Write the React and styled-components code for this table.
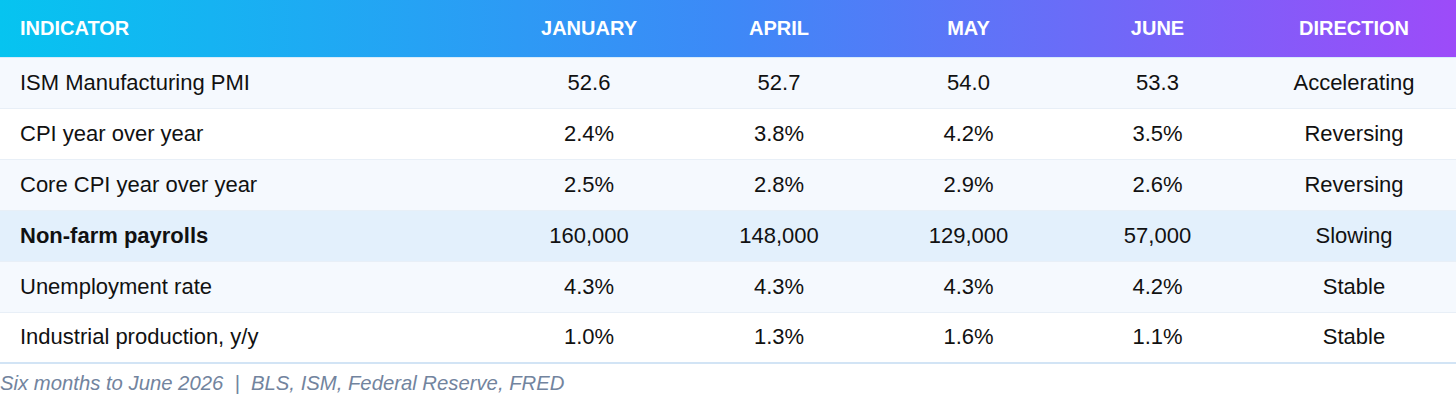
import React from "react";
import styled, { createGlobalStyle } from "styled-components";

const GlobalStyle = createGlobalStyle`
  body {
    margin: 0;
    background: #ffffff;
    font-family: "Liberation Sans", Arial, sans-serif;
  }
`;

const columns = [
  { key: "indicator", label: "Indicator", width: 494, align: "left" },
  { key: "jan", label: "January", width: 190 },
  { key: "apr", label: "April", width: 190 },
  { key: "may", label: "May", width: 189 },
  { key: "jun", label: "June", width: 189 },
  { key: "direction", label: "Direction", width: 204 },
];

const rows = [
  ["ISM Manufacturing PMI", "52.6", "52.7", "54.0", "53.3", "Accelerating"],
  ["CPI year over year", "2.4%", "3.8%", "4.2%", "3.5%", "Reversing"],
  ["Core CPI year over year", "2.5%", "2.8%", "2.9%", "2.6%", "Reversing"],
  ["Non-farm payrolls", "160,000", "148,000", "129,000", "57,000", "Slowing", true],
  ["Unemployment rate", "4.3%", "4.3%", "4.3%", "4.2%", "Stable"],
  ["Industrial production, y/y", "1.0%", "1.3%", "1.6%", "1.1%", "Stable"],
];

function App() {
  return (
    <>
      <GlobalStyle />
      <Wrapper>
        <Table>
          <colgroup>
            {columns.map((c) => (
              <col key={c.key} style={{ width: c.width }} />
            ))}
          </colgroup>
          <thead>
            <HeadRow>
              {columns.map((c) => (
                <HeadCell key={c.key} $align={c.align}>
                  {c.label}
                </HeadCell>
              ))}
            </HeadRow>
          </thead>
          <tbody>
            {rows.map((r, i) => {
              const highlight = r[6] === true;
              return (
                <BodyRow key={r[0]} $odd={i % 2 === 0} $highlight={highlight}>
                  {r.slice(0, 6).map((val, j) => (
                    <Cell
                      key={j}
                      $align={columns[j].align}
                      $bold={highlight && j === 0}
                    >
                      {val}
                    </Cell>
                  ))}
                </BodyRow>
              );
            })}
          </tbody>
        </Table>
        <Caption>
          Six months to June 2026&nbsp;&nbsp;|&nbsp;&nbsp;BLS, ISM, Federal Reserve, FRED
        </Caption>
      </Wrapper>
    </>
  );
}
export default App;

const Wrapper = styled.div`
  width: 1456px;
`;

const Table = styled.table`
  width: 100%;
  table-layout: fixed;
  border-collapse: collapse;
  border-bottom: 2px solid #d2e4f5;
`;

const HeadRow = styled.tr`
  height: 57px;
  background: linear-gradient(90deg, #06c4f0 0%, #3d89f7 50%, #9d4bf9 100%);
  border-bottom: 1px solid #d8ecfb;
`;

const HeadCell = styled.th`
  padding: 0 20px;
  text-align: ${(props) => props.$align || "center"};
  color: #ffffff;
  font-size: 20px;
  font-weight: 700;
  text-transform: uppercase;
  white-space: nowrap;
`;

const BodyRow = styled.tr`
  height: 51px;
  background: ${(props) =>
    props.$highlight ? "#e3f0fc" : props.$odd ? "#f5f9fe" : "#ffffff"};
  border-bottom: 1px solid #e8eff7;

  &:last-child {
    border-bottom: none;
  }
`;

const Cell = styled.td`
  padding: 0 20px;
  text-align: ${(props) => props.$align || "center"};
  color: #111111;
  font-size: 22px;
  font-weight: ${(props) => (props.$bold ? 700 : 400)};
  white-space: nowrap;
`;

const Caption = styled.p`
  margin: 7px 0 0;
  font-size: 20.3px;
  font-style: italic;
  color: #72849e;
  line-height: 24px;
`;
